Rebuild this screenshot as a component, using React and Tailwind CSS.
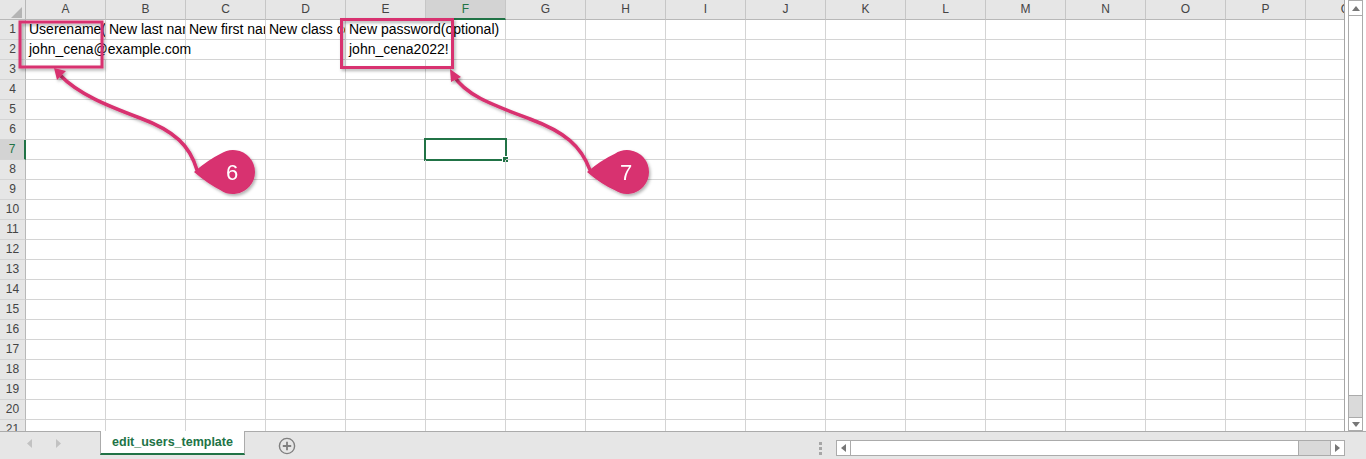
import React from "react";

const COLS = ["A", "B", "C", "D", "E", "F", "G", "H", "I", "J", "K", "L", "M", "N", "O", "P", "Q"];
const ROWS = Array.from({ length: 21 }, (_, i) => i + 1);

// cells with content; span = columns the text runs over (neighbours are empty)
const CELLS = {
  1: {
    0: { text: "Userename(email)" },
    1: { text: "New last name" },
    2: { text: "New first name" },
    3: { text: "New class code" },
    4: { text: "New password(optional)", span: 2 },
  },
  2: {
    0: { text: "john_cena@example.com", span: 2 },
    4: { text: "john_cena2022!", span: 2 },
  },
};

const SEL_COL = 5;
const SEL_ROW = 7;

function HeaderRow() {
  return (
    <div className="flex h-[20px]">
      <div className="relative w-[26px] h-[20px] shrink-0 bg-[#e6e6e6] border-r border-b border-[#b8b8b8]">
        <svg className="absolute left-[11px] top-[7px]" width="11" height="11" viewBox="0 0 11 11">
          <polygon points="11,0 11,11 0,11" fill="#b4b4b4" />
        </svg>
      </div>
      {COLS.map((c, i) => (
        <div
          key={c}
          className={
            i === SEL_COL
              ? "w-[80px] h-[20px] shrink-0 bg-[#d3d3d3] border-r border-[#c6c6c6] border-b-2 border-b-[#217346] text-[#217346] text-[12px] leading-[19px] text-center"
              : "w-[80px] h-[20px] shrink-0 bg-[#e6e6e6] border-r border-[#c6c6c6] border-b border-b-[#b8b8b8] text-[#444] text-[12px] leading-[19px] text-center"
          }
        >
          {c}
        </div>
      ))}
    </div>
  );
}

function Row({ n }) {
  const data = CELLS[n] || {};
  const cells = [];
  for (let c = 0; c < COLS.length; c++) {
    const cell = data[c];
    const span = cell && cell.span ? cell.span : 1;
    const selected = c === SEL_COL && n === SEL_ROW;
    cells.push(
      <div
        key={c}
        className={
          (span === 2 ? "w-[160px]" : "w-[80px]") +
          " relative h-[20px] shrink-0 border-r border-b border-[#d4d4d4] pl-[3px] text-[14px] leading-[19px] text-black whitespace-nowrap" +
          (span === 2 || selected ? "" : " overflow-hidden")
        }
      >
        {cell ? cell.text : ""}
        {selected && (
          <>
            <div className="absolute left-[-2px] top-[-2px] w-[83px] h-[23px] border-2 border-[#217346]" />
            <div className="absolute left-[76px] top-[16px] w-[7px] h-[7px] bg-[#217346] border border-white" />
          </>
        )}
      </div>
    );
    c += span - 1;
  }
  return (
    <div className="flex h-[20px]">
      <div
        className={
          n === SEL_ROW
            ? "w-[26px] h-[20px] shrink-0 bg-[#d3d3d3] border-r-2 border-r-[#217346] border-b border-[#d4d4d4] text-[#217346] text-[12px] leading-[19px] text-center"
            : "w-[26px] h-[20px] shrink-0 bg-[#e6e6e6] border-r border-r-[#b8b8b8] border-b border-[#d4d4d4] text-[#444] text-[12px] leading-[19px] text-center"
        }
      >
        {n}
      </div>
      {cells}
    </div>
  );
}

function VScroll() {
  return (
    <div className="w-[21px] h-[431px] bg-white flex flex-col pl-[3px] pr-[3px]">
      <div className="h-[16px] border border-[#ababab] bg-white flex items-center justify-center">
        <svg width="8" height="5" viewBox="0 0 8 5">
          <polygon points="0,5 8,5 4,0" fill="#777" />
        </svg>
      </div>
      <div className="h-[380px] border-x border-b border-[#ababab] bg-white" />
      <div className="h-[21px] bg-[#dadada] border-x border-[#ababab]" />
      <div className="h-[14px] border border-[#ababab] bg-white flex items-center justify-center">
        <svg width="8" height="5" viewBox="0 0 8 5">
          <polygon points="0,0 8,0 4,5" fill="#777" />
        </svg>
      </div>
    </div>
  );
}

function TabBar() {
  return (
    <div className="flex items-start h-[28px] bg-[#e6e6e6] border-t border-[#ababab]">
      <div className="w-[100px] h-[23px] flex items-center">
        <svg className="ml-[27px]" width="5" height="9" viewBox="0 0 5 9">
          <polygon points="5,0 5,9 0,4.5" fill="#c2c2c2" />
        </svg>
        <svg className="ml-[24px]" width="5" height="9" viewBox="0 0 5 9">
          <polygon points="0,0 0,9 5,4.5" fill="#c2c2c2" />
        </svg>
      </div>
      <div className="-mt-px w-[145px] h-[24px] bg-white border-l border-r border-[#ababab] border-b-2 border-b-[#217346] flex items-center justify-center text-[12.5px] font-bold text-[#217346]">
        edit_users_template
      </div>
      <svg className="ml-[33px] mt-[5px]" width="18" height="18" viewBox="0 0 18 18">
        <circle cx="9" cy="9" r="7.6" fill="none" stroke="#7f7f7f" strokeWidth="1.4" />
        <path d="M9 4.8 V13.2 M4.8 9 H13.2" stroke="#7f7f7f" strokeWidth="1.8" />
      </svg>
      <div className="flex-1" />
      <div className="mt-[10px] mr-[14px] flex flex-col gap-[2px]">
        <div className="w-[3px] h-[3px] bg-[#a6a6a6]" />
        <div className="w-[3px] h-[3px] bg-[#a6a6a6]" />
        <div className="w-[3px] h-[3px] bg-[#a6a6a6]" />
      </div>
      <div className="mt-[8px] mr-[21px] flex h-[16px]">
        <div className="w-[15px] border border-[#ababab] bg-white flex items-center justify-center">
          <svg width="5" height="8" viewBox="0 0 5 8">
            <polygon points="5,0 5,8 0,4" fill="#777" />
          </svg>
        </div>
        <div className="w-[448px] border-y border-r border-[#ababab] bg-white" />
        <div className="w-[31px] border-y border-[#ababab] bg-[#d9d9d9]" />
        <div className="w-[15px] border border-[#ababab] bg-white flex items-center justify-center">
          <svg width="5" height="8" viewBox="0 0 5 8">
            <polygon points="0,0 0,8 5,4" fill="#777" />
          </svg>
        </div>
      </div>
    </div>
  );
}

function Bubble({ cx, cy, tipX, label }) {
  const r = 22;
  const d = cx - tipX;
  const t = Math.asin(r / d);
  const a = Math.PI / 2 - t;
  const topX = cx - r * Math.cos(a);
  const topY = cy - r * Math.sin(a);
  const botY = cy + r * Math.sin(a);
  const path =
    `M${tipX},${cy} Q${tipX + 14},${cy - 12} ${topX},${topY} ` +
    `A${r},${r} 0 1,1 ${topX},${botY} Q${tipX + 14},${cy + 12} ${tipX},${cy} Z`;
  return (
    <g filter="url(#shadow)">
      <path d={path} fill="#d8306f" />
      <text
        x={cx - 1}
        y={cy + 8}
        textAnchor="middle"
        fontSize="22"
        fill="#fff"
        fontFamily="'Liberation Sans', Arial, sans-serif"
      >
        {label}
      </text>
    </g>
  );
}

function Annotations() {
  return (
    <svg className="absolute left-0 top-0 pointer-events-none" width="1366" height="459" viewBox="0 0 1366 459">
      <defs>
        <filter id="shadow" x="-20%" y="-20%" width="140%" height="140%">
          <feDropShadow dx="1.5" dy="2" stdDeviation="1.5" floodColor="#000" floodOpacity="0.3" />
        </filter>
      </defs>
      <g filter="url(#shadow)" fill="none" stroke="#d8306f" strokeWidth="3">
        <rect x="20" y="22" width="82" height="45" />
        <rect x="341.5" y="19.5" width="111" height="48" />
      </g>
      <g filter="url(#shadow)" fill="none" stroke="#d8306f" strokeWidth="3.5" strokeLinecap="round">
        <path d="M197,170 C190,146 175,131 140,118 C108,106 78,94 60,75" />
        <path d="M590,170 C581,146 565,132 530,119 C496,106 466,96 454,76" />
      </g>
      <g filter="url(#shadow)" fill="#d8306f">
        <polygon points="54,68 66,71 57,80" />
        <polygon points="450,69 461,77 451,82" />
      </g>
      <Bubble cx={233} cy={172} tipX={194} label="6" />
      <Bubble cx={627} cy={172} tipX={587} label="7" />
    </svg>
  );
}

export default function App() {
  return (
    <div className="relative w-[1366px] h-[459px] overflow-hidden bg-white font-['Liberation_Sans',Arial,sans-serif]">
      <div className="flex h-[431px]">
        <div className="w-[1345px] h-[431px] overflow-hidden border-r border-[#a6a6a6]">
          <HeaderRow />
          {ROWS.map((n) => (
            <Row key={n} n={n} />
          ))}
        </div>
        <VScroll />
      </div>
      <TabBar />
      <Annotations />
    </div>
  );
}
